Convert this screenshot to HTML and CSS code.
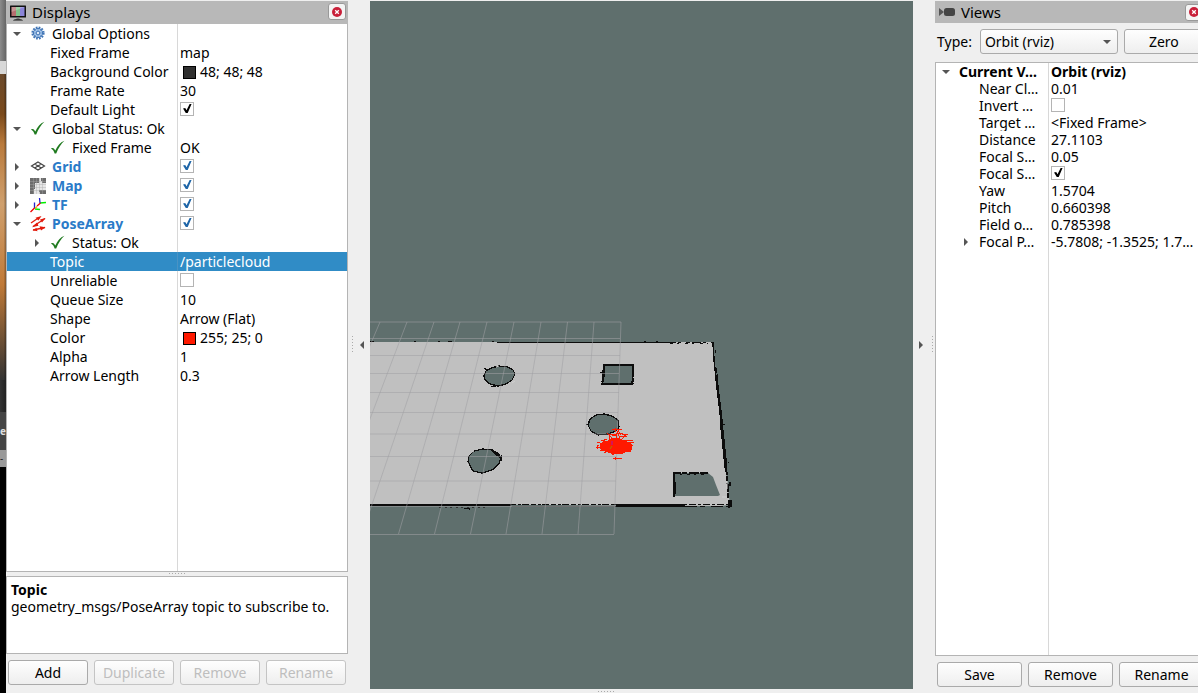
FILE: index.html
```html
<!DOCTYPE html>
<html lang="en">
<head>
<meta charset="utf-8">
<title>RViz</title>
<link rel="stylesheet" href="styles.css">
</head>
<body>
<svg class="defs" aria-hidden="true">
  <defs>
    <symbol id="i-monitor" viewBox="0 0 16 16">
      <rect x="0" y="0.500" width="16" height="12" rx="0.5" fill="#111"/>
      <rect x="1.500" y="2" width="4.500" height="9" fill="#b56f6f"/>
      <rect x="6" y="2" width="4" height="9" fill="#7fc28a"/>
      <rect x="10" y="2" width="4.500" height="9" fill="#8a84d8"/>
      <path d="M1.500 2h13L1.500 7z" fill="#fff" opacity=".25"/>
      <path d="M6.500 12.500h3v1.500h-3z" fill="#777"/>
      <path d="M3 15.500c0-1.800 10-1.800 10 0z" fill="#111"/>
    </symbol>
    <symbol id="i-gear" viewBox="0 0 16 16">
      <circle cx="8" cy="7" r="5.500" fill="none" stroke="#3f74b5" stroke-width="2.200" stroke-dasharray="1.700 1.180"/>
      <circle cx="8" cy="7" r="4.600" fill="#a9c8ec" stroke="#3f74b5" stroke-width="1"/>
      <g stroke="#5d8dc6" stroke-width=".7"><path d="M8 2.500v9M3.500 7h9M4.800 3.800l6.400 6.400M11.200 3.800l-6.400 6.400"/></g>
      <circle cx="8" cy="7" r="1.800" fill="#dfeaf8" stroke="#3f74b5" stroke-width=".9"/>
    </symbol>
    <symbol id="i-ok" viewBox="0 0 16 16">
      <path d="M1 8.500C2.800 7.500 4 8.200 5.300 10.500 7.500 6 10 2.500 14.400 .8 11 4 8.500 8 6.200 13.500H4.600C4 11.200 3 9.500 1 8.500z" fill="#1f7a1f"/>
    </symbol>
    <symbol id="i-grid" viewBox="0 0 16 16">
      <path d="M8 3L14.500 7 8 11 1.500 7zM4.700 5l6.600 4M11.300 5l-6.600 4" fill="none" stroke="#444" stroke-width="1.200"/>
    </symbol>
    <symbol id="i-map" viewBox="0 0 16 16">
      <path d="M0 0h16v16H0z" fill="#e6e6e6"/>
      <path d="M0 0h9v5H5v6H4v5H0zM11 0h5v5h-4V3h-1zM9 12h7v4H10v-2H9z" fill="#6c6c6c"/>
      <path d="M0 3.500h16M0 6.500h16M0 9.500h16M0 12.500h16M3.500 0v16M6.500 0v16M9.500 0v16M12.500 0v16" stroke="#aaa" stroke-width=".4"/>
    </symbol>
    <symbol id="i-tf" viewBox="0 0 16 16">
      <g fill="none" stroke-width="1.300">
        <path d="M10 6l6-.500M5 12l5 .500" stroke="#0e0"/>
        <path d="M10 6L9.500 1M4.500 11.500V5.500" stroke="#22c"/>
        <path d="M10.500 6L7 9M4.500 11L.5 15" stroke="#e00"/>
        <path d="M7 9.500l-2 2" stroke="#e8b000"/>
      </g>
    </symbol>
    <symbol id="i-pose" viewBox="0 0 16 16">
      <g fill="#e21a0c" stroke="#e21a0c" stroke-width="1.300">
        <path d="M1 7L9 1.500" fill="none"/><path d="M5.500 1.800L11.500 0 8.500 4.500z" stroke="none"/>
        <path d="M3 10.500L15 2.500" fill="none"/><path d="M10 3.500L15.500 2 12 6.500zM7 6.500l-5 4.700 6.500-1.500z" stroke="none"/>
        <path d="M3 14l12-2.500" fill="none"/><path d="M9.500 10.200l6 1-4.500 3.300zM6.500 12l-4 2.200 5 1z" stroke="none"/>
      </g>
    </symbol>
    <symbol id="i-camera" viewBox="0 0 16 16">
      <path d="M0 4L5 8 0 12z" fill="#555"/>
      <rect x="5" y="4" width="11" height="8" rx="2.500" fill="#444"/>
    </symbol>
    <symbol id="i-close" viewBox="0 0 12 12">
      <circle cx="6" cy="6" r="5" fill="#c9203a"/>
      <path d="M4.200 4.200l3.600 3.600M7.800 4.200L4.200 7.800" stroke="#fff" stroke-width="1.300"/>
    </symbol>
  </defs>
</svg>

<div class="workspace">
  <div class="desktop" aria-hidden="true">
    <div class="desk-gray"></div>
    <div class="desk-light"></div>
    <div class="desk-wood"></div>
    <div class="desk-dark"></div>
    <div class="desk-tab">e</div>
    <div class="desk-field">-</div>
    <div class="desk-black"></div>
  </div>

  <section class="dock displays" aria-label="Displays">
    <header class="dock-title">
      <svg class="icon"><use href="#i-monitor"/></svg>
      <span class="dock-name">Displays</span>
      <button class="close" aria-label="Close Displays"><svg><use href="#i-close"/></svg></button>
    </header>
    <div class="tree-box">
      <table class="tree">
        <colgroup><col class="col-name"><col></colgroup>
        <tbody>
          <tr><td><div class="cell"><i class="arrow open"></i><svg class="icon"><use href="#i-gear"/></svg>Global Options</div></td><td></td></tr>
          <tr><td><div class="cell leaf">Fixed Frame</div></td><td>map</td></tr>
          <tr><td><div class="cell leaf">Background Color</div></td><td><span class="swatch dark"></span>48; 48; 48</td></tr>
          <tr><td><div class="cell leaf">Frame Rate</div></td><td>30</td></tr>
          <tr><td><div class="cell leaf"><label for="light">Default Light</label></div></td><td><input type="checkbox" id="light" checked></td></tr>
          <tr><td><div class="cell"><i class="arrow open"></i><svg class="icon"><use href="#i-ok"/></svg>Global Status: Ok</div></td><td></td></tr>
          <tr><td><div class="cell leaf"><svg class="icon"><use href="#i-ok"/></svg>Fixed Frame</div></td><td>OK</td></tr>
          <tr class="display"><td><div class="cell"><i class="arrow"></i><svg class="icon"><use href="#i-grid"/></svg><label for="grid">Grid</label></div></td><td><input type="checkbox" id="grid" checked></td></tr>
          <tr class="display"><td><div class="cell"><i class="arrow"></i><svg class="icon"><use href="#i-map"/></svg><label for="map">Map</label></div></td><td><input type="checkbox" id="map" checked></td></tr>
          <tr class="display"><td><div class="cell"><i class="arrow"></i><svg class="icon"><use href="#i-tf"/></svg><label for="tf">TF</label></div></td><td><input type="checkbox" id="tf" checked></td></tr>
          <tr class="display"><td><div class="cell"><i class="arrow open"></i><svg class="icon"><use href="#i-pose"/></svg><label for="pose">PoseArray</label></div></td><td><input type="checkbox" id="pose" checked></td></tr>
          <tr><td><div class="cell child"><i class="arrow"></i><svg class="icon"><use href="#i-ok"/></svg>Status: Ok</div></td><td></td></tr>
          <tr class="selected"><td><div class="cell leaf">Topic</div></td><td>/particlecloud</td></tr>
          <tr><td><div class="cell leaf"><label for="unrel">Unreliable</label></div></td><td><input type="checkbox" id="unrel"></td></tr>
          <tr><td><div class="cell leaf">Queue Size</div></td><td>10</td></tr>
          <tr><td><div class="cell leaf">Shape</div></td><td>Arrow (Flat)</td></tr>
          <tr><td><div class="cell leaf">Color</div></td><td><span class="swatch red"></span>255; 25; 0</td></tr>
          <tr><td><div class="cell leaf">Alpha</div></td><td>1</td></tr>
          <tr><td><div class="cell leaf">Arrow Length</div></td><td>0.3</td></tr>
          <tr class="filler"><td></td><td></td></tr>
        </tbody>
      </table>
    </div>
    <div class="splitter"></div>
    <div class="help"><b>Topic</b><p>geometry_msgs/PoseArray topic to subscribe to.</p></div>
    <div class="buttons">
      <button class="btn">Add</button>
      <button class="btn" disabled>Duplicate</button>
      <button class="btn" disabled>Remove</button>
      <button class="btn" disabled>Rename</button>
    </div>
  </section>

  <button class="gutter" aria-label="Hide left dock"><i class="dots"></i><i class="fold left"></i></button>

  <main class="view">
    <svg class="scene" viewBox="370 1 543 688" preserveAspectRatio="xMidYMid slice" role="img" aria-label="Map with particle cloud">
      <path d="M360 342H713L716 375 722 432 727 480 730 505 720 506 360 504z" fill="#c0c0c0"/>
      <g fill="#5f6f6d" stroke="#0c0c0c" stroke-width="1.300" shape-rendering="crispEdges">
        <path d="M484 376L486 371 491 368 499 366 508 367 513 370 515 374 512 380 506 384 498 386 490 384 485 380z"/>
        <path d="M468 462L469 456 474 451 483 449 492 450 498 453 501 458 499 464 492 470 482 473 473 471z"/>
        <path d="M588 425L590 419 596 415 604 414 612 416 618 420 619 427 616 431 608 434 598 435 591 431z"/>
        <path d="M604 365H633L632 384H602L604 376z"/>
      </g>
      <path d="M674 473H708L713 477 716 485 720 495 718 496H675z" fill="#5f6f6d"/>
      <g fill="none" stroke="#0c0c0c" shape-rendering="crispEdges">
        <path d="M674 472V497" stroke-width="2"/>
        <path d="M675.500 482v12"/>
        <path d="M673 473H709" stroke-width="2" stroke-dasharray="8 1 5 2 10 1"/>
        <path d="M680 474.500h28" stroke-dasharray="2 5 3 4"/>
        <path d="M632.500 365V384M603 370v14" stroke-width="2" stroke-dasharray="12 1 4 1"/>
        <path d="M603 384.500H633" stroke-dasharray="6 2 3 1"/>
        <path d="M492 450L500 457" stroke-width="2.500"/>
        <path d="M484 368.500l3 1M491 386h5M501 455v6M602 372h-2M604 381h-3M586 424h3"/>
        <path d="M497 342.500H672" stroke-width="1"/>
        <path d="M370 341.500H497" stroke-dasharray="4 40 2 22 2 8"/>
        <path d="M667 342.500H712" stroke-dasharray="9 2 3 5 4 2"/>
        <path d="M670 343.500H708" stroke-dasharray="3 4 2 6"/>
        <path d="M644 341.500h2M656 341.500h2"/>
        <path d="M713 342L714 360 716 378" stroke-width="1.500"/>
        <path d="M715 350v3M716 368v5M717 374v8M723 424h2M728 462h1"/>
        <path d="M716 375L722 425" stroke-width="2.500"/>
        <path d="M721 420L726 468" stroke-width="3"/>
        <path d="M726 466L728 490 729 508" stroke-width="2" stroke-dasharray="9 1 5 2"/>
        <path d="M730 482v4M731 500v7" stroke-width="1.500"/>
        <path d="M360 505H511" stroke-width="2"/>
        <path d="M511 504.500H616" stroke-dasharray="5 2 3 1 7 2"/>
        <path d="M512 506.500H616" stroke="#333"/>
        <path d="M616 505.500H685" stroke-width="3"/>
        <path d="M675 504.500H728" stroke-dasharray="7 2 3 2"/>
        <path d="M685 506.500H732" stroke-dasharray="12 3 5 6"/>
        <path d="M439 507.500H488" stroke="#333" stroke-dasharray="2 4 2 3"/>
        <path d="M464 508h5v2"/>
      </g>
      <path d="M496 367l3-1M512 383l3-2M468 466v-3M472 452l2-1M727 481v8M722 497h5" stroke="#d0d0d0" fill="none"/>
      <g fill="none" stroke="#a0a0a4" stroke-opacity=".55">
        <path d="M360 322H621M360 338.500H620M360 355.500H620M360 373.500H619M360 392.500H619M360 412.500H618M360 434H617M360 456.500H617M360 481H616M360 506.500H615M360 534.500H614"/>
        <path d="M621 322L614 534M594 322L578 534M567.500 322L542 534M541 322L506 534M514 322L470.500 534M487 322L434.500 534M460 322L398.500 534M434 322L362 534M407 322L326 534M380 322L290 534"/>
      </g>
      <g stroke="#ff1900" fill="none" shape-rendering="crispEdges">
        <path d="M600 446L603 442 608 441 613 438 619 439 625 441 631 444 631 450 625 452 619 454 611 453 605 451 601 449z" fill="#ff1900"/>
        <path d="M597 442l6 2M596 448l7-1M599 445h-2M597 449l1-3M604 450l-4 1M607 440l-3-1M609 439l1-3M612 438l-4-4 8 2M616 438l1-5M620 439l-3-8M622 439l4-4M625 440l8 1M628 443l6-1M630 446l3-1M628 451l3 1M612 430l5-1M613 429l9 1M615 428v4M618 430l3 5M610 434l7 1M619 436l8 1M617 433l11 2M622 433l3 3M606 452l-2 1M614 454l-2 1M622 453l1 1M609 442l-8-2"/>
        <path d="M613 458.500h9M615 457v3"/>
      </g>
      <path d="M612 441v4" stroke="#b010b0"/>
      <path d="M612 446l-2 3" stroke="#a08000"/>
    </svg>
  </main>

  <button class="gutter" aria-label="Hide right dock"><i class="fold right"></i><i class="dots"></i></button>

  <section class="dock views" aria-label="Views">
    <header class="dock-title">
      <svg class="icon"><use href="#i-camera"/></svg>
      <span class="dock-name">Views</span>
      <button class="close" aria-label="Close Views"><svg><use href="#i-close"/></svg></button>
    </header>
    <div class="type-row">
      <label for="type">Type:</label>
      <div class="combo"><select id="type"><option>Orbit (rviz)</option></select></div>
      <button class="btn">Zero</button>
    </div>
    <div class="tree-box">
      <table class="tree">
        <colgroup><col class="col-name"><col></colgroup>
        <tbody>
          <tr class="current"><td><div class="cell"><i class="arrow open"></i>Current V…</div></td><td>Orbit (rviz)</td></tr>
          <tr><td><div class="cell leaf">Near Cl…</div></td><td>0.01</td></tr>
          <tr><td><div class="cell leaf"><label for="invert">Invert …</label></div></td><td><input type="checkbox" id="invert"></td></tr>
          <tr><td><div class="cell leaf">Target …</div></td><td>&lt;Fixed Frame&gt;</td></tr>
          <tr><td><div class="cell leaf">Distance</div></td><td>27.1103</td></tr>
          <tr><td><div class="cell leaf">Focal S…</div></td><td>0.05</td></tr>
          <tr><td><div class="cell leaf"><label for="fixed">Focal S…</label></div></td><td><input type="checkbox" id="fixed" checked></td></tr>
          <tr><td><div class="cell leaf">Yaw</div></td><td>1.5704</td></tr>
          <tr><td><div class="cell leaf">Pitch</div></td><td>0.660398</td></tr>
          <tr><td><div class="cell leaf">Field o…</div></td><td>0.785398</td></tr>
          <tr><td><div class="cell child"><i class="arrow"></i>Focal P…</div></td><td>-5.7808; -1.3525; 1.7…</td></tr>
          <tr class="filler"><td></td><td></td></tr>
        </tbody>
      </table>
    </div>
    <div class="buttons">
      <button class="btn">Save</button>
      <button class="btn">Remove</button>
      <button class="btn">Rename</button>
    </div>
  </section>
</div>
</body>
</html>
```
FILE: styles.css
```css
* { box-sizing: border-box; }
body {
  margin: 0;
  font: 14px/19px "Noto Sans", "Open Sans", sans-serif;
  color: #000;
  background: #efefef;
}
button, select { font: inherit; color: inherit; }
.defs { position: absolute; width: 0; height: 0; }

.workspace {
  display: grid;
  grid-template-columns: 6px 342px 22px minmax(0, 1fr) 22px 263px;
  height: 100vh;
  overflow: hidden;
}

/* strip of the desktop left of the window */
.desktop { display: flex; flex-direction: column; background: #000; overflow: hidden; color: #ddd; font-size: 10px; }
.desk-gray { height: 61px; background: linear-gradient(90deg, #8c8c8c, #666); }
.desk-light { height: 13px; background: #d8d8d8; }
.desk-wood { height: 306px; background: linear-gradient(90deg, transparent 60%, #0005), linear-gradient(#6b4a2c, #7a4a1c 40px, #b97a3c 70px, #cfa06e 130px, #c07a38 210px, #333 306px); }
.desk-dark { height: 32px; background: linear-gradient(90deg, #333, #222); }
.desk-tab { height: 38px; line-height: 38px; background: #444; font-weight: bold; }
.desk-field { height: 17px; line-height: 17px; background: #999; color: #222; }
.desk-black { flex: 1; }

.dock { display: flex; flex-direction: column; min-width: 0; padding-top: 1px; overflow: hidden; }
.dock-title {
  display: flex;
  align-items: center;
  height: 23px;
  padding: 0 2px 0 4px;
  background: #b8b8b8;
  font-size: 15px;
  flex: none;
}
.dock-name { margin-left: 6px; flex: 1; }
.icon { width: 16px; height: 16px; flex: none; }
.close {
  display: flex;
  align-items: center;
  justify-content: center;
  width: 18px;
  height: 17px;
  margin-bottom: 2px;
  padding: 0;
  border: 1px solid #999;
  border-radius: 3px;
  background: #f4f4f4;
}
.close svg { width: 12px; height: 12px; }

.tree-box { flex: 1; display: flex; background: #fff; border: 1px solid #b4b4b4; border-top: 0; min-height: 0; overflow: hidden; }
.tree { width: 100%; height: 100%; table-layout: fixed; border-collapse: separate; border-spacing: 0; }
.col-name { width: 171px; }
.tree td { padding: 0; height: 19px; white-space: nowrap; overflow: hidden; vertical-align: middle; }
.tree td:first-child { border-right: 1px solid #d8d8d8; }
.tree td + td { padding-left: 2px; }
.tree .filler td { height: auto; }
.cell { display: flex; align-items: center; height: 19px; padding-left: 23px; }
.cell.child, .cell.leaf { padding-left: 43px; }
.cell .icon { margin-right: 6px; }
.display { font-weight: bold; color: #2a7bc8; }
.current { font-weight: bold; }
.selected { background: #308cc6; color: #fff; }
.tree .selected td:first-child { border-color: #4a93c4; }

.arrow { flex: none; width: 20px; height: 19px; margin-left: -23px; margin-right: 3px; display: flex; align-items: center; justify-content: center; }
.arrow::before { content: ""; border: 4px solid transparent; border-left-color: #555; border-right: 0; }
.arrow.open::before { border: 4px solid transparent; border-top-color: #555; border-bottom: 0; }

input[type="checkbox"] {
  appearance: none;
  display: block;
  width: 14px;
  height: 14px;
  margin: 0 0 2px;
  border: 1px solid #b4b4b4;
  background: #fff;
}
input[type="checkbox"]:checked::before {
  content: "";
  display: block;
  width: 12px;
  height: 12px;
  background: #000;
  clip-path: polygon(17% 50%, 35% 46%, 46% 65%, 72% 12%, 88% 12%, 56% 88%, 40% 88%);
}
.display input[type="checkbox"]:checked::before { background: #1f66a8; }

.swatch { display: inline-block; width: 13px; height: 13px; margin: 0 4px 0 3px; border: 1px solid #000; vertical-align: -2px; }
.swatch.dark { background: #303030; }
.swatch.red { background: #ff1900; }

.splitter { flex: none; height: 4px; display: flex; justify-content: center; }
.splitter::before { content: ""; width: 17px; height: 1px; margin-top: 1px; background: repeating-linear-gradient(90deg, #aaa 0 1px, transparent 1px 3px); }
.help { flex: none; height: 78px; padding: 4px; border: 1px solid #b4b4b4; background: #fff; line-height: 17px; white-space: nowrap; }
.help p { margin: 0; }

.buttons { flex: none; display: flex; gap: 6px; padding: 6px 2px 8px; }
.btn {
  flex: 1 0 0;
  height: 25px;
  padding: 0;
  line-height: 22px;
  border: 1px solid #aaa;
  border-radius: 3px;
  background: linear-gradient(#fefefe, #eee);
}
.btn:disabled { color: #bebebe; border-color: #c4c4c4; }

.gutter { display: flex; align-items: center; justify-content: flex-end; gap: 6px; padding: 0 6px 4px 0; border: 0; background: none; }
.gutter .dots { width: 1px; height: 17px; background: repeating-linear-gradient(#aaa 0 1px, transparent 1px 3px); }
.fold { border: 4px solid transparent; }
.fold.left { border-right-color: #555; border-left: 0; }
.fold.right { border-left-color: #555; border-right: 0; }
.dots + .fold { margin-left: 1px; }
.fold + .dots { margin-left: 3px; }
.gutter:has(.right) { padding-right: 2px; }

.view { display: flex; flex-direction: column; min-width: 0; padding-top: 1px; }
.scene { flex: 1; width: 100%; min-height: 0; background: #5f6f6d; }
.view::after { content: ""; align-self: center; width: 17px; height: 1px; margin: 2px 70px 1px 0; background: repeating-linear-gradient(90deg, #aaa 0 1px, transparent 1px 3px); }

/* the Views dock runs past the window edge */
.views .dock-title { width: 270px; height: 22px; }
.views .close { margin-bottom: 0; }
.views .tree-box { width: 270px; border-top: 1px solid #b4b4b4; }
.views .col-name { width: 113px; }
.views .tree td, .views .cell, .views .arrow { height: 17px; line-height: 17px; }
.views .tree .filler td { height: auto; }
.type-row { flex: none; display: flex; align-items: center; gap: 6px; padding: 6px 2px 8px; }
.type-row label { width: 37px; }
.combo { width: 138px; margin-left: 2px; flex: none; position: relative; }
.combo select {
  appearance: none;
  display: block;
  width: 100%;
  height: 25px;
  padding: 0 4px;
  border: 1px solid #aaa;
  border-radius: 3px;
  background: linear-gradient(#fefefe, #eee);
}
.combo::after { content: ""; position: absolute; right: 7px; top: 11px; border: 4px solid transparent; border-top-color: #555; border-bottom: 0; }
.views .btn { flex: none; width: 85px; }
.views .type-row .btn { width: 80px; }
.views .buttons { padding-bottom: 6px; }
```
